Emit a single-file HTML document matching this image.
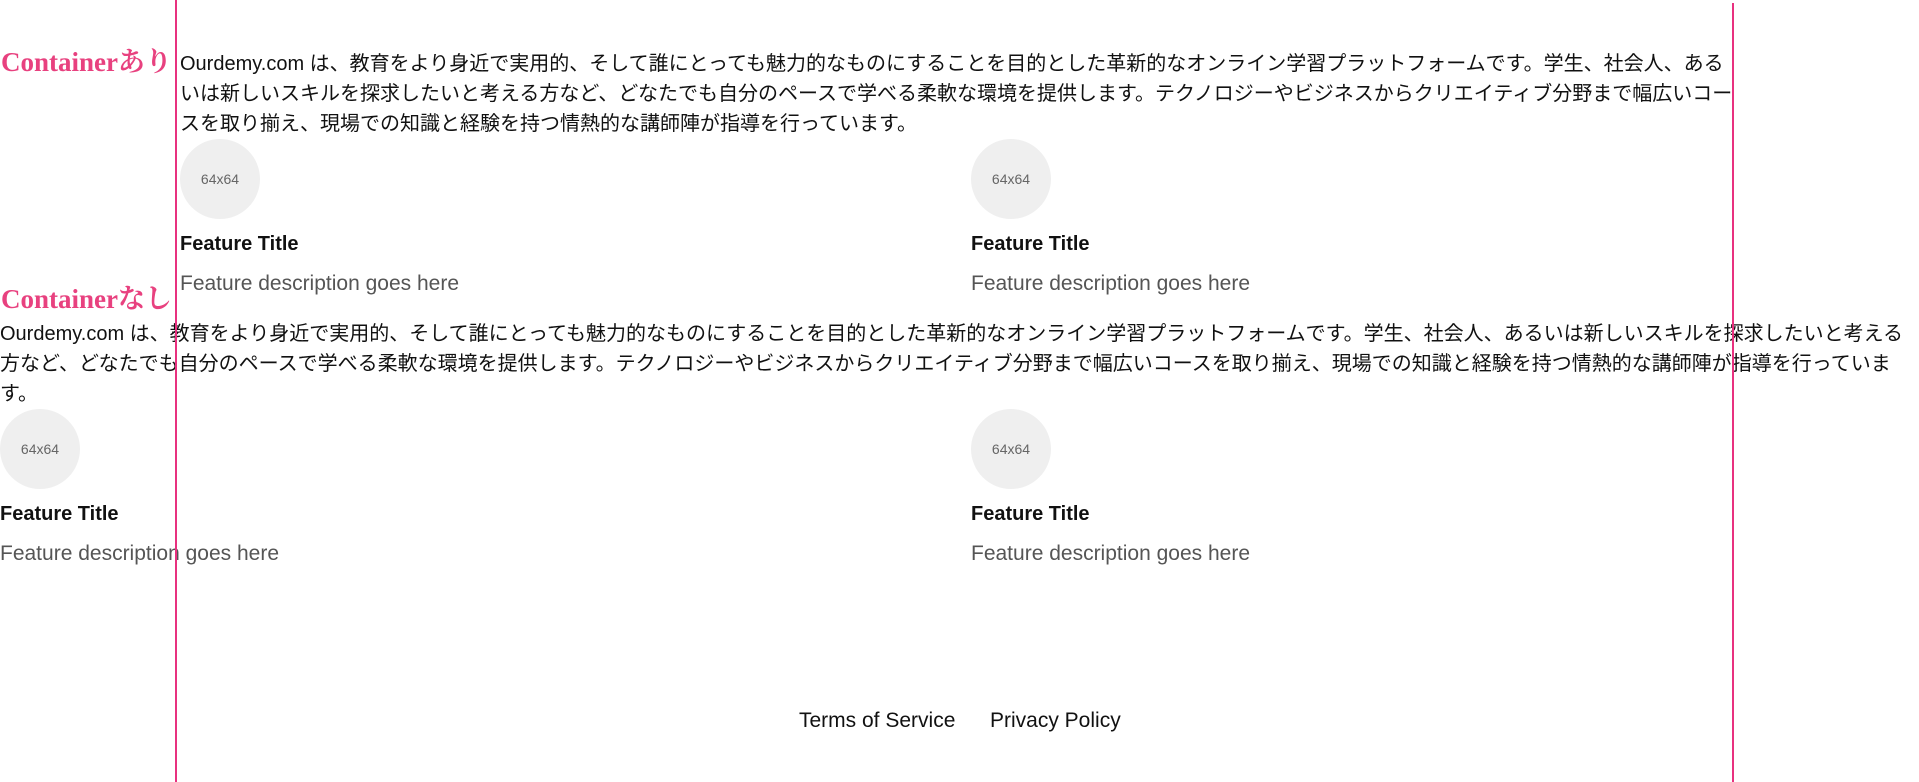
<!DOCTYPE html>
<html><head><meta charset="utf-8"><style>
*{margin:0;padding:0;box-sizing:border-box}
body{width:1919px;height:782px;position:relative;overflow:hidden;background:#fff;font-family:"Liberation Sans","Noto Sans CJK JP",sans-serif;color:#111}
.a{position:absolute;white-space:nowrap}
.lbl{font-family:"Liberation Serif","Noto Serif CJK SC",serif;color:#e8417f;font-size:27px;line-height:30px;font-weight:bold;letter-spacing:0}
.p{font-size:20px;line-height:30px}
.c{width:80px;height:80px;border-radius:50%;background:#efefef;color:#666;font-size:14px;display:flex;align-items:center;justify-content:center}
.t{font-size:20px;font-weight:bold;line-height:24px}
.d{font-size:21px;color:#555;line-height:24px}
.v{position:absolute;width:2px;background:#e8317f}
.f{font-size:21px;line-height:24px}
</style></head><body>
<div class="a lbl" style="left:1px;top:47px">Containerあり</div>
<div class="a p" style="left:180px;top:49px">Ourdemy.com は、教育をより身近で実用的、そして誰にとっても魅力的なものにすることを目的とした革新的なオンライン学習プラットフォームです。学生、社会人、ある<br>いは新しいスキルを探求したいと考える方など、どなたでも自分のペースで学べる柔軟な環境を提供します。テクノロジーやビジネスからクリエイティブ分野まで幅広いコー<br>スを取り揃え、現場での知識と経験を持つ情熱的な講師陣が指導を行っています。</div>
<div class="a c" style="left:180px;top:139px">64x64</div>
<div class="a c" style="left:971px;top:139px">64x64</div>
<div class="a t" style="left:180px;top:232px">Feature Title</div>
<div class="a t" style="left:971px;top:232px">Feature Title</div>
<div class="a d" style="left:180px;top:272px">Feature description goes here</div>
<div class="a d" style="left:971px;top:272px">Feature description goes here</div>
<div class="a lbl" style="left:1px;top:284px">Containerなし</div>
<div class="a p" style="left:0;top:319px">Ourdemy.com は、教育をより身近で実用的、そして誰にとっても魅力的なものにすることを目的とした革新的なオンライン学習プラットフォームです。学生、社会人、あるいは新しいスキルを探求したいと考える<br>方など、どなたでも自分のペースで学べる柔軟な環境を提供します。テクノロジーやビジネスからクリエイティブ分野まで幅広いコースを取り揃え、現場での知識と経験を持つ情熱的な講師陣が指導を行っていま<br>す。</div>
<div class="a c" style="left:0;top:409px">64x64</div>
<div class="a c" style="left:971px;top:409px">64x64</div>
<div class="a t" style="left:0;top:502px">Feature Title</div>
<div class="a t" style="left:971px;top:502px">Feature Title</div>
<div class="a d" style="left:0;top:542px">Feature description goes here</div>
<div class="a d" style="left:971px;top:542px">Feature description goes here</div>
<div class="a f" style="left:799px;top:709px">Terms of Service</div>
<div class="a f" style="left:990px;top:709px">Privacy Policy</div>
<div class="v" style="left:175px;top:0;height:782px"></div>
<div class="v" style="left:1732px;top:3px;height:779px"></div>
</body></html>
